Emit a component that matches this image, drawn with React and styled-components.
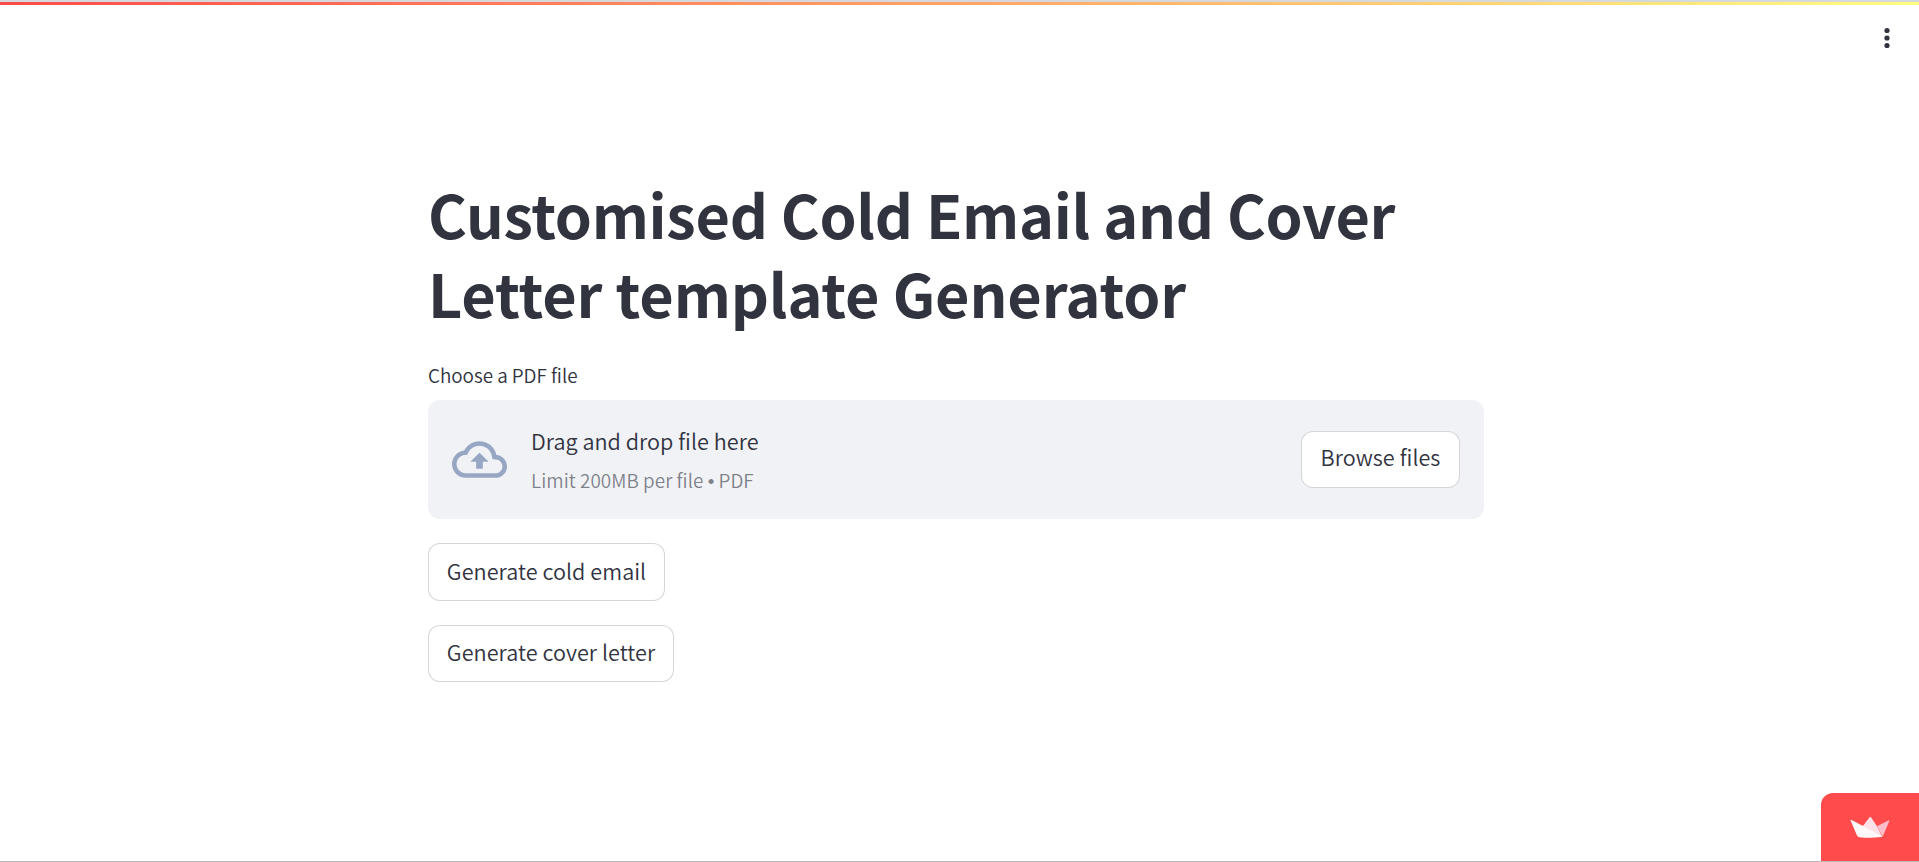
import React from "react";
import styled, { createGlobalStyle } from "styled-components";
import { MdOutlineCloudUpload } from "react-icons/md";

const GlobalStyle = createGlobalStyle`
  * { box-sizing: border-box; }
  html, body { margin: 0; background: #fff; overflow: hidden; }
  body {
    color: #31333f;
    font-family: "Noto Sans CJK SC", "Noto Sans", sans-serif;
    font-size: 21.6px;
    font-weight: 350;
    font-kerning: normal;
  }
`;

const Page = styled.div`
  position: relative;
  display: flex;
  flex-direction: column;
  width: 100%;
  height: 100vh;
  border-top: 2px solid #d5d8dc;
  border-bottom: 1px solid #b9b9b9;
`;

const Decoration = styled.div`
  height: 3px;
  flex: none;
  background: linear-gradient(90deg, #ff4b4b, #fffd80);
`;

const Toolbar = styled.header`
  display: flex;
  justify-content: flex-end;
  flex: none;
  height: 66px;
  padding: 18px 17px 0 0;
`;

const MenuButton = styled.button`
  width: 30px;
  height: 30px;
  padding: 0;
  border: 0;
  background: none;
  color: #31333f;

  svg { display: block; }
`;

const Content = styled.main`
  display: flex;
  flex-direction: column;
  align-items: flex-start;
  width: 1056px;
  margin-left: 428px;
  padding-top: 103px;
`;

const Title = styled.h1`
  margin: 0;
  font-size: 59.4px;
  font-weight: 700;
  line-height: 79px;
  white-space: nowrap;
`;

const TitleLine = styled.span`
  display: block;
  letter-spacing: ${(p) => p.$tracking}px;
`;

const Label = styled.label`
  margin-top: 28px;
  margin-bottom: 11px;
  height: 29px;
  font-size: 18.9px;
  line-height: 30px;
  letter-spacing: -0.04px;
`;

const Dropzone = styled.section`
  display: flex;
  align-items: center;
  width: 100%;
  height: 119px;
  padding: 0 24px;
  margin-bottom: 24px;
  border-radius: 12px;
  background: #f0f2f6;
`;

const UploadIcon = styled(MdOutlineCloudUpload)`
  flex: none;
  width: 55px;
  height: 55px;
  margin-right: 24px;
  color: rgb(151, 166, 195);
`;

const Instructions = styled.div`
  display: flex;
  flex-direction: column;
  flex: 1;
  padding-top: 4px;
`;

const Prompt = styled.span`
  line-height: 38px;
  letter-spacing: 0.03px;
`;

const Limit = styled.small`
  font-size: 18.9px;
  line-height: 40px;
  letter-spacing: 0.03px;
  color: rgba(49, 51, 63, 0.6);
`;

const Bullet = styled.span`
  font-family: "Liberation Sans", sans-serif;
`;

const Button = styled.button`
  width: ${(p) => p.$width}px;
  height: ${(p) => p.$height || 57}px;
  flex: none;
  padding: 0 0 ${(p) => p.$lift || 4}px;
  border: 1px solid rgba(49, 51, 63, 0.2);
  border-radius: 12px;
  background: #fff;
  color: inherit;
  font: inherit;
  line-height: 38px;
  letter-spacing: 0.05px;
  white-space: nowrap;
`;

const Actions = styled.div`
  display: flex;
  flex-direction: column;
  align-items: flex-start;
  gap: 24px;
`;

const Badge = styled.a`
  position: absolute;
  right: 0;
  bottom: 0;
  width: 98px;
  height: 68px;
  border-radius: 12px 0 0 0;
  background: #ff4b4b;

  svg { display: block; margin: 23px 0 0 29px; }
`;

export default function App() {
  return (
    <>
      <GlobalStyle />
      <Page>
        <Decoration />
        <Toolbar>
          <MenuButton aria-label="Main menu">
            <svg width="30" height="30" viewBox="0 0 30 30" fill="currentColor">
              <circle cx="15" cy="7.5" r="2.6" />
              <circle cx="15" cy="15" r="2.6" />
              <circle cx="15" cy="22.5" r="2.6" />
            </svg>
          </MenuButton>
        </Toolbar>
        <Content>
          <Title>
            <TitleLine $tracking={-0.3}>Customised Cold Email and Cover</TitleLine>
            <TitleLine $tracking={-0.15}>Letter template Generator</TitleLine>
          </Title>
          <Label>Choose a PDF file</Label>
          <Dropzone>
            <UploadIcon />
            <Instructions>
              <Prompt>Drag and drop file here</Prompt>
              <Limit>Limit 200MB per file <Bullet>•</Bullet> PDF</Limit>
            </Instructions>
            <Button $width={159} $lift={5}>Browse files</Button>
          </Dropzone>
          <Actions>
            <Button $width={237} $height={58} $lift={3}>Generate cold email</Button>
            <Button $width={246}>Generate cover letter</Button>
          </Actions>
        </Content>
        <Badge aria-label="Streamlit">
          <svg width="40" height="24" viewBox="0 0 40 24">
            <path d="M12.5 10.5L19.6 1.2Q20.3 .2 21 1.2L27 10.2L32 20Z" fill="#ffe1e8" />
            <path d="M27 10.2L38.3 4.4Q39.5 4 39.2 5.2L33.2 19.5L32.6 20.2Z" fill="#ffbdc9" />
            <path d="M.6 4.5Q.5 3.4 1.6 4L32.7 20.3Q32 21 30.8 21.1Q20 22.3 9.3 21.2Q7.6 21 7 19.6Z" fill="#fffafa" />
          </svg>
        </Badge>
      </Page>
    </>
  );
}
